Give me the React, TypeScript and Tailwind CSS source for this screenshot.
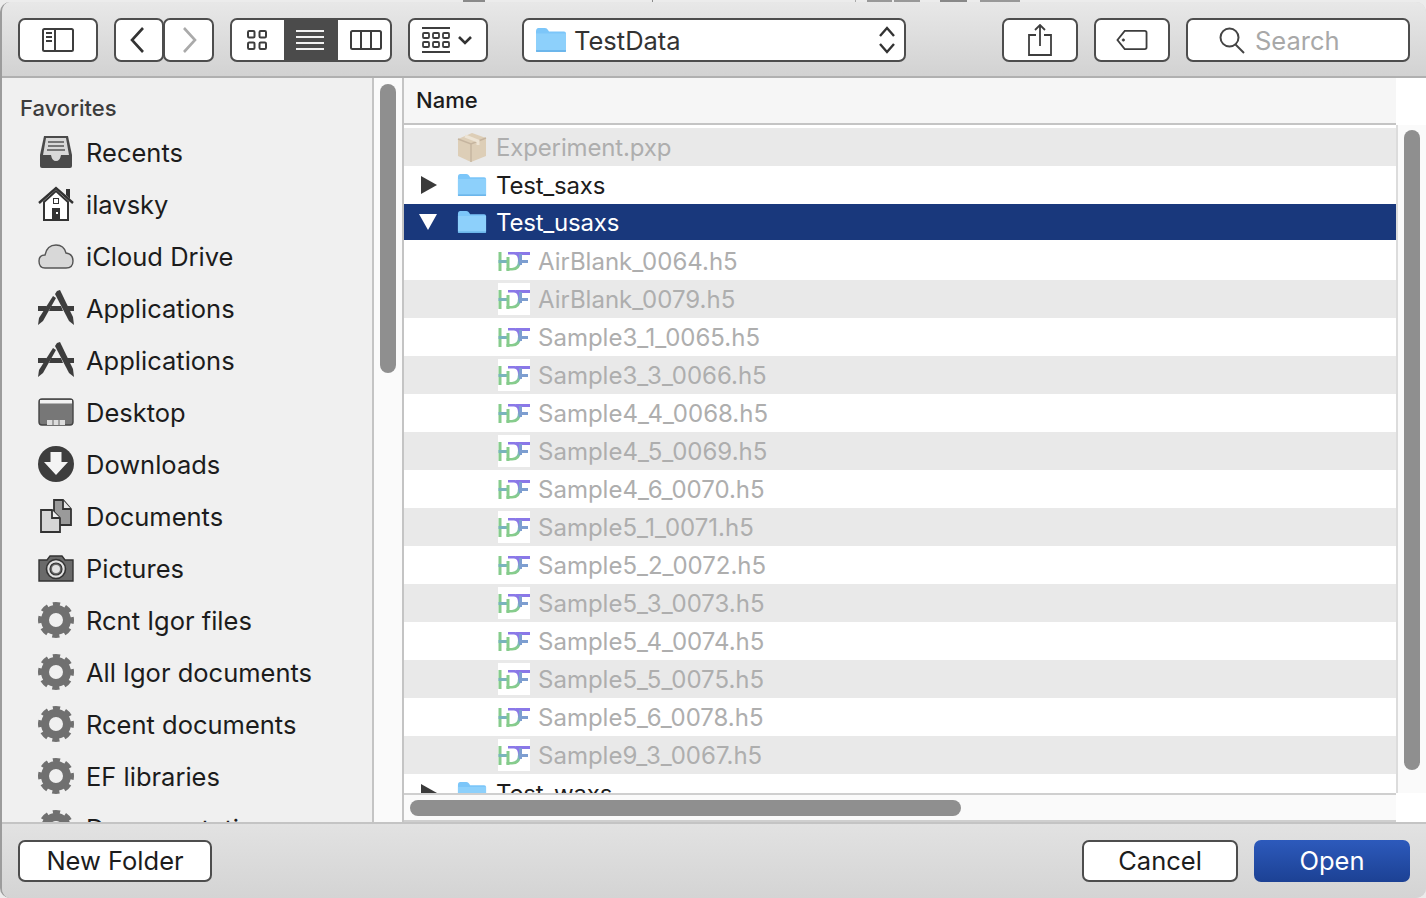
import { ReactNode } from "react";

const files = [
  "AirBlank_0064.h5",
  "AirBlank_0079.h5",
  "Sample3_1_0065.h5",
  "Sample3_3_0066.h5",
  "Sample4_4_0068.h5",
  "Sample4_5_0069.h5",
  "Sample4_6_0070.h5",
  "Sample5_1_0071.h5",
  "Sample5_2_0072.h5",
  "Sample5_3_0073.h5",
  "Sample5_4_0074.h5",
  "Sample5_5_0075.h5",
  "Sample5_6_0078.h5",
  "Sample9_3_0067.h5",
];

function Folder({ w = 30, h = 24 }: { w?: number; h?: number }) {
  return (
    <svg width={w} height={h} viewBox="0 0 32 26" preserveAspectRatio="none">
      <path d="M1 4.5Q1 1 3.5 1H10Q12 1 13 3L14 4.5H29Q31 4.5 31 6.5V23Q31 25 29 25H3Q1 25 1 23Z" fill="#7cc6f9" />
      <path d="M1 6.5H31V23Q31 25 29 25H3Q1 25 1 23Z" fill="#8dd0fb" />
      <path d="M1 24H31" stroke="#62aee6" strokeWidth="1.5" />
    </svg>
  );
}

function Hdf() {
  return (
    <svg width="32" height="32" viewBox="0 0 32 32">
      <defs>
        <linearGradient id="hdfg" x1="0" y1="0" x2="0" y2="1">
          <stop offset="0.3" stopColor="#8a78e8" />
          <stop offset="0.6" stopColor="#78b8b8" />
          <stop offset="0.85" stopColor="#86cc8c" />
        </linearGradient>
      </defs>
      <rect x="0.5" y="7" width="3" height="19" fill="#86cc8c" />
      <rect x="0.5" y="15" width="10" height="3" fill="#79b4bc" />
      <rect x="8.5" y="12" width="3" height="14" fill="#86cc8c" />
      <path d="M10 7H17Q23 7 23 15.5Q23 25.5 14 25.5H8.5V23H14Q20 22.5 20 15.5Q20 9.5 16 9.5H10Z" fill="url(#hdfg)" />
      <rect x="18" y="7" width="14" height="3" fill="#8a78e8" />
      <rect x="21" y="15" width="9" height="3" fill="#7d9ed0" />
      <rect x="21" y="9" width="3" height="11" fill="#7d9ed0" />
    </svg>
  );
}

function Gear() {
  return (
    <svg width="36" height="36" viewBox="0 0 36 36">
      <circle cx="18" cy="18" r="11" fill="none" stroke="#707070" strokeWidth="8" />
      <circle cx="18" cy="18" r="15.5" fill="none" stroke="#707070" strokeWidth="5" strokeDasharray="7 5.17" strokeDashoffset="3.5" />
    </svg>
  );
}

function AppsIcon() {
  return (
    <svg width="36" height="36" viewBox="0 0 36 36" fill="#3d3d3d">
      <path d="M0 16H9L7 21H0ZM13 16H23L25 21H11ZM27 16H36V21H29Z" />
      <path d="M15 6L18 8L5 31L0 35L1 28Z" />
      <path d="M19 1L22 0L35 27L36 35L31 31L17 4Z" />
    </svg>
  );
}

const sidebar: { label: string; icon: ReactNode }[] = [
  {
    label: "Recents",
    icon: (
      <svg width="36" height="34" viewBox="0 0 36 34">
        <path d="M6 1H30L34 20V31Q34 33 32 33H4Q2 33 2 31V20Z" fill="#4a4a4a" />
        <path d="M8 3H28L31 20H23Q22 26 18 26Q14 26 13 20H5Z" fill="#d8d8d8" />
        <path d="M10 7H26M10 11H26M9 15H27" stroke="#555" strokeWidth="1.6" />
      </svg>
    ),
  },
  {
    label: "ilavsky",
    icon: (
      <svg width="36" height="36" viewBox="0 0 36 36">
        <path d="M1 17L18 2L35 17" fill="none" stroke="#333" strokeWidth="2.4" />
        <path d="M28 3H32V13L28 9Z" fill="#333" />
        <path d="M6 16L18 5L30 16V34H6Z" fill="#fff" stroke="#333" strokeWidth="2" />
        <rect x="14" y="22" width="8" height="12" fill="#333" />
        <rect x="15.5" y="12.5" width="5" height="5" fill="#fff" stroke="#333" strokeWidth="1" />
        <rect x="18" y="26" width="2" height="2" fill="#fff" />
      </svg>
    ),
  },
  {
    label: "iCloud Drive",
    icon: (
      <svg width="36" height="26" viewBox="0 0 36 26">
        <path d="M7 25Q1 25 1 18Q1 12 7 12Q9 2 18 2Q26 2 28 10Q35 11 35 18Q35 25 28 25Z" fill="#d8d8d8" stroke="#555" strokeWidth="1.4" />
      </svg>
    ),
  },
  { label: "Applications", icon: <AppsIcon /> },
  { label: "Applications", icon: <AppsIcon /> },
  {
    label: "Desktop",
    icon: (
      <svg width="36" height="28" viewBox="0 0 36 28">
        <rect x="1" y="1" width="34" height="26" rx="3" fill="#777" stroke="#444" strokeWidth="1.4" />
        <rect x="2" y="2" width="32" height="3.5" fill="#f2f2f2" />
        <rect x="9" y="22" width="18" height="5" fill="#ddd" />
        <path d="M15 22V27M21 22V27" stroke="#666" />
      </svg>
    ),
  },
  {
    label: "Downloads",
    icon: (
      <svg width="36" height="36" viewBox="0 0 36 36">
        <circle cx="18" cy="18" r="18" fill="#3d3d3d" />
        <path d="M12.5 6H23.5V16H30L18 29L6 16H12.5Z" fill="#f4f4f4" />
      </svg>
    ),
  },
  {
    label: "Documents",
    icon: (
      <svg width="32" height="34" viewBox="0 0 32 34">
        <path d="M14 1H23L31 10V26H14Z" fill="#9a9a9a" stroke="#333" strokeWidth="1.8" />
        <path d="M23 1V10H31" fill="#e8e8e8" stroke="#333" strokeWidth="1.8" />
        <path d="M1 11H12L20 19V33H1Z" fill="#d6d6d6" stroke="#333" strokeWidth="1.8" />
        <path d="M12 11V19H20" fill="#f0f0f0" stroke="#333" strokeWidth="1.8" />
      </svg>
    ),
  },
  {
    label: "Pictures",
    icon: (
      <svg width="36" height="28" viewBox="0 0 36 28">
        <path d="M1 6H9L12 2H24L27 6H35V27H1Z" fill="#6a6a6a" stroke="#333" strokeWidth="1.4" />
        <circle cx="18" cy="15" r="9.5" fill="#e2e2e2" stroke="#333" strokeWidth="1.6" />
        <circle cx="18" cy="15" r="6" fill="#6a6a6a" stroke="#333" strokeWidth="1.2" />
        <circle cx="18" cy="15" r="4" fill="#e2e2e2" />
      </svg>
    ),
  },
  { label: "Rcnt Igor files", icon: <Gear /> },
  { label: "All Igor documents", icon: <Gear /> },
  { label: "Rcent documents", icon: <Gear /> },
  { label: "EF libraries", icon: <Gear /> },
  { label: "Documentation", icon: <Gear /> },
];

const toolBtn = "h-[44px] rounded-[7px] border-2 border-[#4d4d4d] bg-white flex items-center justify-center shrink-0";
const pushBtn = "h-[42px] rounded-[7px] border-2 border-[#4d4d4d] bg-white text-[#1c1c1c] text-[25.5px] flex items-center justify-center";

function Toolbar() {
  return (
    <div className="h-[76px] shrink-0 flex items-center pl-[16px] pr-[16px] pt-[1px] bg-gradient-to-b from-[#e8e8e8] to-[#d2d2d2] border-b-2 border-[#b0b0b0]">
      <div className={`${toolBtn} w-[80px]`}>
        <svg width="32" height="26" viewBox="0 0 32 26" fill="none" stroke="#3d3d3d" strokeWidth="2">
          <rect x="1" y="2" width="30" height="22" rx="1.5" />
          <path d="M13 2V24M4 6H10M4 10H10M4 14H10" />
        </svg>
      </div>
      <div className={`${toolBtn} w-[50px] ml-[16px] pr-[4px]`}>
        <svg width="14" height="26" viewBox="0 0 14 26" fill="none" stroke="#333" strokeWidth="2.6">
          <path d="M13 1L2 13L13 25" />
        </svg>
      </div>
      <div className={`${toolBtn} w-[51px] -ml-px pl-[2px]`}>
        <svg width="14" height="26" viewBox="0 0 14 26" fill="none" stroke="#aaa" strokeWidth="2.6">
          <path d="M1 1L12 13L1 25" />
        </svg>
      </div>
      <div className={`${toolBtn} w-[162px] ml-[16px] overflow-hidden justify-start`}>
        <div className="w-[52px] h-full flex items-center justify-center pr-[3px]">
          <svg width="20" height="20" viewBox="0 0 20 20" fill="none" stroke="#3d3d3d" strokeWidth="2">
            <rect x="1" y="1" width="6.5" height="6.5" rx="1.2" />
            <rect x="12.5" y="1" width="6.5" height="6.5" rx="1.2" />
            <rect x="1" y="12.5" width="6.5" height="6.5" rx="1.2" />
            <rect x="12.5" y="12.5" width="6.5" height="6.5" rx="1.2" />
          </svg>
        </div>
        <div className="w-[54px] h-full bg-[#4b4b4b] flex items-center justify-center pr-[2px]">
          <svg width="28" height="22" viewBox="0 0 28 22" stroke="#f2f2f2" strokeWidth="2">
            <path d="M0 2H28M0 8H28M0 14H28M0 20H28" />
          </svg>
        </div>
        <div className="flex-1 h-full flex items-center justify-center pl-[4px]">
          <svg width="32" height="20" viewBox="0 0 32 20" fill="none" stroke="#3d3d3d" strokeWidth="2">
            <rect x="1" y="1" width="30" height="18" rx="1.5" />
            <path d="M11 1V19M21 1V19" />
          </svg>
        </div>
      </div>
      <div className={`${toolBtn} w-[80px] ml-[16px] gap-[8px] pr-[2px]`}>
        <svg width="28" height="26" viewBox="0 0 28 26" fill="none" stroke="#3d3d3d" strokeWidth="1.8">
          <path d="M0 1H28M0 25H28" />
          <rect x="1" y="6" width="6" height="5" rx="1" />
          <rect x="11" y="6" width="6" height="5" rx="1" />
          <rect x="21" y="6" width="6" height="5" rx="1" />
          <rect x="1" y="15" width="6" height="5" rx="1" />
          <rect x="11" y="15" width="6" height="5" rx="1" />
          <rect x="21" y="15" width="6" height="5" rx="1" />
        </svg>
        <svg width="14" height="10" viewBox="0 0 14 10" fill="none" stroke="#333" strokeWidth="2.6">
          <path d="M1 2L7 8L13 2" />
        </svg>
      </div>
      <div className={`${toolBtn} w-[384px] ml-[34px] justify-start pl-[11px] pr-[8px]`}>
        <Folder w={32} h={26} />
        <span className="ml-[7px] pt-[4px] text-[25.5px] text-[#333]">TestData</span>
        <svg className="ml-auto" width="18" height="28" viewBox="0 0 18 28" fill="none" stroke="#333" strokeWidth="2.4">
          <path d="M2 10L9 2L16 10M2 18L9 26L16 18" />
        </svg>
      </div>
      <div className={`${toolBtn} w-[76px] ml-[96px]`}>
        <svg width="24" height="32" viewBox="0 0 24 32" fill="none" stroke="#3d3d3d" strokeWidth="1.8">
          <path d="M8 11H1V31H23V11H16M12 22V1M7 6L12 1L17 6" />
        </svg>
      </div>
      <div className={`${toolBtn} w-[76px] ml-[16px]`}>
        <svg width="32" height="20" viewBox="0 0 34 22" fill="none" stroke="#3d3d3d" strokeWidth="2">
          <path d="M9 1H31Q33 1 33 3V19Q33 21 31 21H9L1 11Z" />
          <circle cx="7.5" cy="11" r="1.4" fill="#3d3d3d" strokeWidth="0.6" />
        </svg>
      </div>
      <div className={`${toolBtn} w-[224px] ml-[16px] justify-start pl-[30px]`}>
        <svg width="28" height="28" viewBox="0 0 28 28" fill="none" stroke="#444" strokeWidth="2">
          <circle cx="11.5" cy="11.5" r="9" />
          <path d="M17.5 18.5L26 27" />
        </svg>
        <span className="ml-[9px] pt-[4px] text-[25.5px] text-[#a8a8a8]">Search</span>
      </div>
    </div>
  );
}

function Sidebar() {
  return (
    <div className="w-[370px] shrink-0 overflow-hidden bg-[#f0f0f0] pt-[16px] pl-[18px]">
      <div className="text-[22px] leading-[28px] font-medium text-[#3c3c3c] mb-[4px]">Favorites</div>
      {sidebar.map((item, i) => (
        <div key={i} className="h-[52px] flex items-center shrink-0 pl-[18px]">
          <div className="w-[36px] flex justify-center shrink-0">{item.icon}</div>
          <span className="ml-[12px] pt-[2px] text-[25.5px] text-[#1c1c1c] whitespace-nowrap">{item.label}</span>
        </div>
      ))}
    </div>
  );
}

function Row({ bg, indent, icon, children }: { bg: string; indent: string; icon: ReactNode; children: ReactNode }) {
  return (
    <div className={`h-[38px] shrink-0 flex items-center ${bg} ${indent}`}>
      {icon}
      {children}
    </div>
  );
}

function Triangle() {
  return (
    <svg width="16" height="18" viewBox="0 0 16 18">
      <path d="M0 0L16 9L0 18Z" fill="#3a3a3a" />
    </svg>
  );
}

function FilePane() {
  return (
    <div className="flex-1 flex flex-col min-w-0 bg-white">
      <div className="h-[45px] shrink-0 flex items-center bg-[#f6f6f6] pl-[12px] mr-[30px] text-[22px] font-medium text-[#1c1c1c]">
        Name
      </div>
      <div className="h-[2px] shrink-0 bg-[#c4c4c4] mr-[30px]" />
      <div className="flex-1 flex min-h-0">
        <div className="flex-1 min-w-0 overflow-hidden bg-white pt-[3px] flex flex-col">
          <Row
            bg="bg-[#e9e9e9]"
            indent="pl-[52px]"
            icon={
              <svg className="opacity-70" width="32" height="32" viewBox="0 0 32 32">
                <path d="M2 8L16 2L30 7V25L15 31L2 25Z" fill="#d9c3a2" />
                <path d="M2 8L15 13L30 7M15 13V31" fill="none" stroke="#b79f80" strokeWidth="1.4" />
                <path d="M9 5L22 10V14" fill="none" stroke="#efe2cd" strokeWidth="3" />
              </svg>
            }
          >
            <span className="ml-[8px] pt-[2px] text-[24px] tracking-[-0.15px] text-[#aeaeae]">Experiment.pxp</span>
          </Row>
          <Row bg="bg-white" indent="pl-[17px]" icon={<Triangle />}>
            <span className="ml-[20px] flex"><Folder /></span>
            <span className="ml-[9px] pt-[2px] text-[24px] tracking-[-0.2px] text-[#1c1c1c]">Test_saxs</span>
          </Row>
          <div className="h-[38px] shrink-0 border-b-2 border-white flex items-center bg-[#19387c] pl-[15px]">
            <svg width="18" height="16" viewBox="0 0 18 16">
              <path d="M0 0H18L9 16Z" fill="#fff" />
            </svg>
            <span className="ml-[20px] flex"><Folder /></span>
            <span className="ml-[9px] pt-[2px] text-[24px] tracking-[-0.2px] text-white">Test_usaxs</span>
          </div>
          {files.map((f, i) => (
            <Row
              key={f}
              bg={i % 2 === 1 ? "bg-[#e9e9e9]" : "bg-white"}
              indent="pl-[94px]"
              icon={
                <span className="bg-white w-[32px] h-[32px] flex">
                  <Hdf />
                </span>
              }
            >
              <span className="ml-[8px] pt-[2px] text-[24px] text-[#aeaeae]">{f}</span>
            </Row>
          ))}
          <Row bg="bg-white" indent="pl-[17px]" icon={<Triangle />}>
            <span className="ml-[20px] flex"><Folder /></span>
            <span className="ml-[9px] pt-[2px] text-[24px] tracking-[-0.2px] text-[#1c1c1c]">Test_waxs</span>
          </Row>
        </div>
        {/* vertical scroller */}
        <div className="w-[30px] shrink-0 bg-[#fafafa] border-l-2 border-[#dcdcdc] pt-[5px] pl-[6px]">
          <div className="w-[16px] h-[640px] rounded-full bg-[#8f8f8f]" />
        </div>
      </div>
      {/* horizontal scroller */}
      <div className="h-[29px] shrink-0 bg-[#fafafa] border-t-2 border-b-2 border-[#cfcfcf] mr-[30px] pl-[6px] pt-[5px]">
        <div className="w-[551px] h-[16px] rounded-full bg-[#8f8f8f]" />
      </div>
    </div>
  );
}

export default function App() {
  return (
    <div
      className="w-[1426px] h-[898px] overflow-hidden bg-[#ececec]"
      style={{ fontFamily: "Inter, 'Liberation Sans', sans-serif" }}
    >
      {/* whatever sits behind the dialog, only a sliver shows */}
      <div className="h-[2px] flex">
        <div className="w-[463px]" />
        <div className="w-[22px] bg-[#8a8a8a]" />
        <div className="w-[167px]" />
        <div className="w-[1px] bg-[#8a8a8a]" />
        <div className="w-[202px]" />
        <div className="w-[1px] bg-[#aaa]" />
        <div className="w-[11px]" />
        <div className="w-[25px] bg-[#999]" />
        <div className="w-[2px]" />
        <div className="w-[26px] bg-[#999]" />
        <div className="w-[20px]" />
        <div className="w-[27px] bg-[#888]" />
        <div className="w-[13px]" />
        <div className="w-[40px] bg-[#999]" />
      </div>
      <div className="h-[896px] flex flex-col rounded-[10px] overflow-hidden border-l-2 border-[#9c9c9c] bg-[#d8d8d8]">
        <Toolbar />
        <div className="flex-1 flex min-h-0">
          <Sidebar />
          <div className="w-[2px] shrink-0 bg-[#c4c4c4]" />
          <div className="w-[28px] shrink-0 bg-[#fafafa] pt-[6px] pl-[6px]">
            <div className="w-[16px] h-[289px] rounded-full bg-[#8f8f8f]" />
          </div>
          <div className="w-[2px] shrink-0 bg-[#c4c4c4]" />
          <FilePane />
        </div>
        <div className="h-[76px] shrink-0 flex items-center pl-[16px] pr-[16px] bg-gradient-to-b from-[#e2e2e2] to-[#d4d4d4] border-t-2 border-[#c4c4c4]">
          <button className={`${pushBtn} w-[194px]`}>New Folder</button>
          <button className={`${pushBtn} w-[156px] ml-auto`}>Cancel</button>
          <button className="h-[42px] w-[156px] ml-[16px] rounded-[7px] bg-gradient-to-b from-[#2d5abc] to-[#1c4194] text-white text-[25.5px] flex items-center justify-center">
            Open
          </button>
        </div>
      </div>
    </div>
  );
}
